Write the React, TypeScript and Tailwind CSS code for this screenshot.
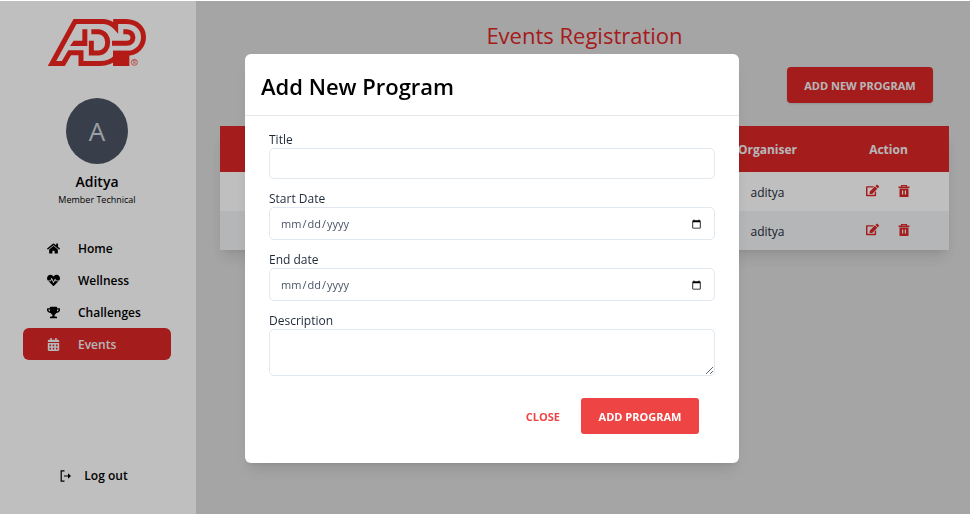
import React from "react";
import { FaHome, FaHeartbeat, FaTrophy, FaCalendarAlt, FaEdit } from "react-icons/fa";

const font = "font-['Open_Sans','Noto_Sans',sans-serif]";

function Logo() {
  return (
    <svg viewBox="141 54 300 150" className="h-[50px] w-[100px]" role="img" aria-label="ADP">
      <g fill="none" stroke="#f1251f" strokeWidth="15">
        <path d="M156 190.500L225 64.500H312Q332 66 347 82V64.500H378C412 65 430.500 86 430.500 111C430.500 137 412 160 378 160H347V172Q330 190.500 300 190.500H243V158.500H209L190 190.500Z" />
        <path d="M274 95H296C332 98 332 157 296 159H274V122" />
        <path d="M370 95H380C405 96 405 129 380 130H336" />
      </g>
      <path d="M247 88H262V138H210L221 122H247ZM339 152H388V198H339Z" fill="#f1251f" />
      <circle cx="403" cy="187" r="9" fill="none" stroke="#f1251f" strokeWidth="2" />
      <text x="403" y="192" textAnchor="middle" fontSize="14" fill="#f1251f">R</text>
    </svg>
  );
}

function TrashIcon() {
  return (
    <svg viewBox="0 0 12 12" className="size-3" fill="currentColor" aria-hidden="true">
      <path
        fillRule="evenodd"
        d="M3 0H9V1.500H11.500V3H.5V1.500H3ZM4.200 1.100V1.500H7.800V1.100ZM1.500 3.600H10.500V12H1.500ZM4 5.500V9.500H5.200V5.500ZM6.800 5.500V9.500H8V5.500Z"
      />
    </svg>
  );
}

function LogoutIcon() {
  return (
    <svg viewBox="0 0 12 12" className="size-3" fill="none" stroke="currentColor" strokeWidth="1.2" aria-hidden="true">
      <path d="M4.500 .8H1.200V11.200H4.500M4 6H10" />
      <path d="M8 3.300L11 6L8 8.700Z" fill="currentColor" stroke="none" />
    </svg>
  );
}

const links = [
  { label: "Home", Icon: FaHome },
  { label: "Wellness", Icon: FaHeartbeat },
  { label: "Challenges", Icon: FaTrophy },
  { label: "Events", Icon: FaCalendarAlt, active: true },
];

function Sidebar() {
  return (
    <aside className="flex w-[196px] shrink-0 flex-col items-center bg-white pt-[17px] pr-0.5 shadow-xl">
      <Logo />
      <div className="mt-[30px] flex h-[66px] w-[62px] items-center justify-center rounded-[50%] bg-[#4b5563] text-[26px] text-gray-300">
        A
      </div>
      <div className="mt-2 text-[14px] leading-5 font-semibold">Aditya</div>
      <div className="text-[9px] leading-4">Member Technical</div>
      <nav className="mt-6 w-full px-[23px]">
        {links.map(({ label, Icon, active }) => (
          <a
            key={label}
            href="#"
            className={
              "flex h-8 items-center gap-[18px] rounded-md pl-6 text-[12px] font-semibold " +
              (active ? "bg-[#dc2626] text-gray-100" : "text-black")
            }
          >
            <Icon className="size-[13px]" />
            <span className="pt-0.5">{label}</span>
          </a>
        ))}
      </nav>
      <a href="#" className="mt-auto mr-1.5 mb-7 flex items-center gap-3 text-[12px] leading-5 font-semibold">
        <LogoutIcon />
        Log out
      </a>
    </aside>
  );
}

function Events() {
  return (
    <main className="flex min-w-0 flex-1 flex-col bg-[#ddd] pr-[21px] pl-6">
      <h1 className="mt-[18px] text-center text-[22px] leading-8 font-medium text-[#dc2626]">Events Registration</h1>
      <button
        type="button"
        className="mt-4 mr-4 h-9 w-[146px] self-end rounded bg-[#dc2626] pt-0.5 text-[11px] font-bold text-gray-100 shadow"
      >
        ADD NEW PROGRAM
      </button>
      <table className="mt-[23px] w-full table-fixed text-center text-[12px] shadow-lg">
        <thead>
          <tr className="h-[46px] bg-[#dc2626] text-gray-100">
            <td />
            <th className="w-[121px] pt-0.5 font-bold">Organiser</th>
            <th className="w-[121px] pt-0.5 font-bold">Action</th>
          </tr>
        </thead>
        <tbody>
          {[1, 2].map((id) => (
            <tr key={id} className="h-[39px] bg-white text-gray-800 even:bg-[#f1f3f5]">
              <td />
              <td className="pt-0.5">aditya</td>
              <td className="pr-0.5 pb-0.5">
                <div className="flex justify-center gap-[19px] text-[#dc2626]">
                  <button type="button" aria-label="Edit">
                    <FaEdit className="size-[13px]" />
                  </button>
                  <button type="button" aria-label="Delete">
                    <TrashIcon />
                  </button>
                </div>
              </td>
            </tr>
          ))}
        </tbody>
      </table>
    </main>
  );
}

const field = "block w-full rounded-[5px] border border-slate-200 bg-white px-2.5";
const dateField = field + " h-[33px] pt-0.5 text-[11px] text-gray-600";
const label = "block h-[18px] pt-px text-[12px] leading-[18px] text-gray-800";

function ProgramDialog() {
  return (
    <div className="fixed inset-x-0 top-px bottom-0 flex items-start justify-center bg-black/25 pt-[53px] pl-[14px]">
      <form role="dialog" aria-labelledby="dialog-title" className="w-[494px] rounded-md bg-white shadow-lg">
        <h2 id="dialog-title" className="border-b border-gray-200 px-4 pt-4 pb-[13px] text-[22px] leading-8 font-semibold">
          Add New Program
        </h2>
        <div className="px-6 pt-[14px] pb-[29px]">
          <label htmlFor="title" className={label}>Title</label>
          <input id="title" type="text" className={field + " h-[31px] text-[11px]"} />
          <label htmlFor="start" className={label + " mt-2.5"}>Start Date</label>
          <input id="start" type="date" className={dateField} />
          <label htmlFor="end" className={label + " mt-2.5"}>End date</label>
          <input id="end" type="date" className={dateField} />
          <label htmlFor="description" className={label + " mt-2.5"}>Description</label>
          <textarea id="description" className={field + " h-[47px] resize text-[11px]"} />
          <div className="mt-[22px] flex justify-end gap-[21px] pr-4">
            <button type="button" className="pt-0.5 text-[11px] font-bold text-[#ef4444]">CLOSE</button>
            <button type="submit" className="h-9 w-[118px] rounded-[3px] bg-[#ef4444] pt-0.5 text-[11px] font-bold text-white">
              ADD PROGRAM
            </button>
          </div>
        </div>
      </form>
    </div>
  );
}

export default function App() {
  return (
    <div className={"flex min-h-screen bg-white pt-px text-black " + font}>
      <Sidebar />
      <Events />
      <ProgramDialog />
    </div>
  );
}
